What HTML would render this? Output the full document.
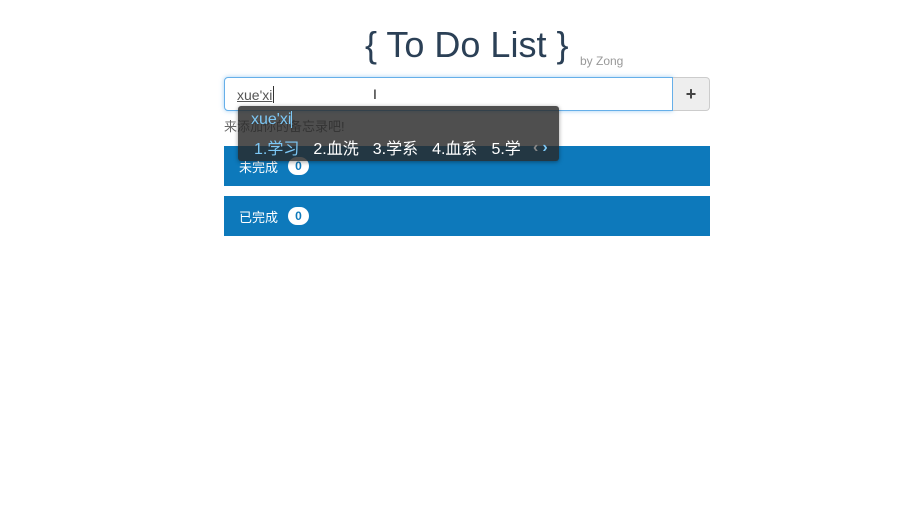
<!DOCTYPE html>
<html><head><meta charset="utf-8"><style>
body{margin:0;width:921px;height:532px;background:#fff;font-family:"Liberation Sans","Noto Sans CJK SC",sans-serif;position:relative;overflow:hidden}
.t{position:absolute;left:365px;top:24px;font-size:36px;color:#2b4056;white-space:nowrap}
.by{position:absolute;left:580px;top:54px;font-size:12px;color:#999}
.inp{position:absolute;left:224px;top:77px;width:447px;height:32px;border:1px solid #66afe9;border-radius:4px 0 0 4px;box-shadow:0 0 5px rgba(102,175,233,.6);background:#fff}
.inp span{position:absolute;left:12px;top:9px;font-size:14px;color:#555;text-decoration:underline}
.caret{position:absolute;left:48px;top:8px;width:1px;height:17px;background:#333}
.btn{position:absolute;left:673px;top:77px;width:36px;height:32px;border:1px solid #ccc;border-left:none;border-radius:0 4px 4px 0;background:#eee;font-size:18px;font-weight:bold;color:#444;text-align:center;line-height:32px}
.hint{position:absolute;left:224px;top:116px;font-size:13px;color:#666}
.bar{position:absolute;left:224px;width:486px;height:40px;background:#0d79bb;color:#fff;font-size:13px}
.bar span{position:absolute;left:15px;top:11px}
.badge{position:absolute;left:64px;top:11px;width:21px;height:18px;border-radius:9px;background:#fff}
.badge em{position:absolute;left:0;right:0;top:3px;text-align:center;font-style:normal;color:#0d79bb;font-size:12px;font-weight:bold;line-height:12px}
.ime{position:absolute;left:238px;top:106px;width:321px;height:55px;background:rgba(40,40,40,.82);border-radius:3px;box-shadow:0 1px 4px rgba(0,0,0,.4)}
.ime .p{position:absolute;left:13px;top:5px;font-size:16px;color:#7cc7f5}
.ime .p i{display:inline-block;width:1px;height:17px;background:#7cc7f5;vertical-align:middle}
.ime .c{position:absolute;left:16px;top:29px;font-size:16px;color:#fff;white-space:nowrap}
.ime .c b{font-weight:normal;margin-right:14px}
.ime .c b:first-child{color:#7cc7f5}
.ar{position:absolute;left:295px;top:33px;font-size:16px;font-weight:bold;color:#888;letter-spacing:4px}
</style></head><body>
<div class="t">{ To Do List }</div><div class="by">by Zong</div>
<div class="inp"><span>xue'xi</span><div class="caret"></div><div style="position:absolute;left:148px;top:8px;font-size:14px;color:#222">I</div></div>
<div class="btn">+</div>
<div class="hint">来添加你的备忘录吧!</div>
<div class="bar" style="top:146px"><span>未完成</span><div class="badge"><em>0</em></div></div>
<div class="bar" style="top:196px"><span>已完成</span><div class="badge"><em>0</em></div></div>
<div class="ime"><div class="p">xue'xi<i></i></div>
<div class="c"><b>1.学习</b><b>2.血洗</b><b>3.学系</b><b>4.血系</b><b>5.学</b></div>
<div class="ar">‹<span style="color:#7cc7f5">›</span></div></div>
</body></html>
